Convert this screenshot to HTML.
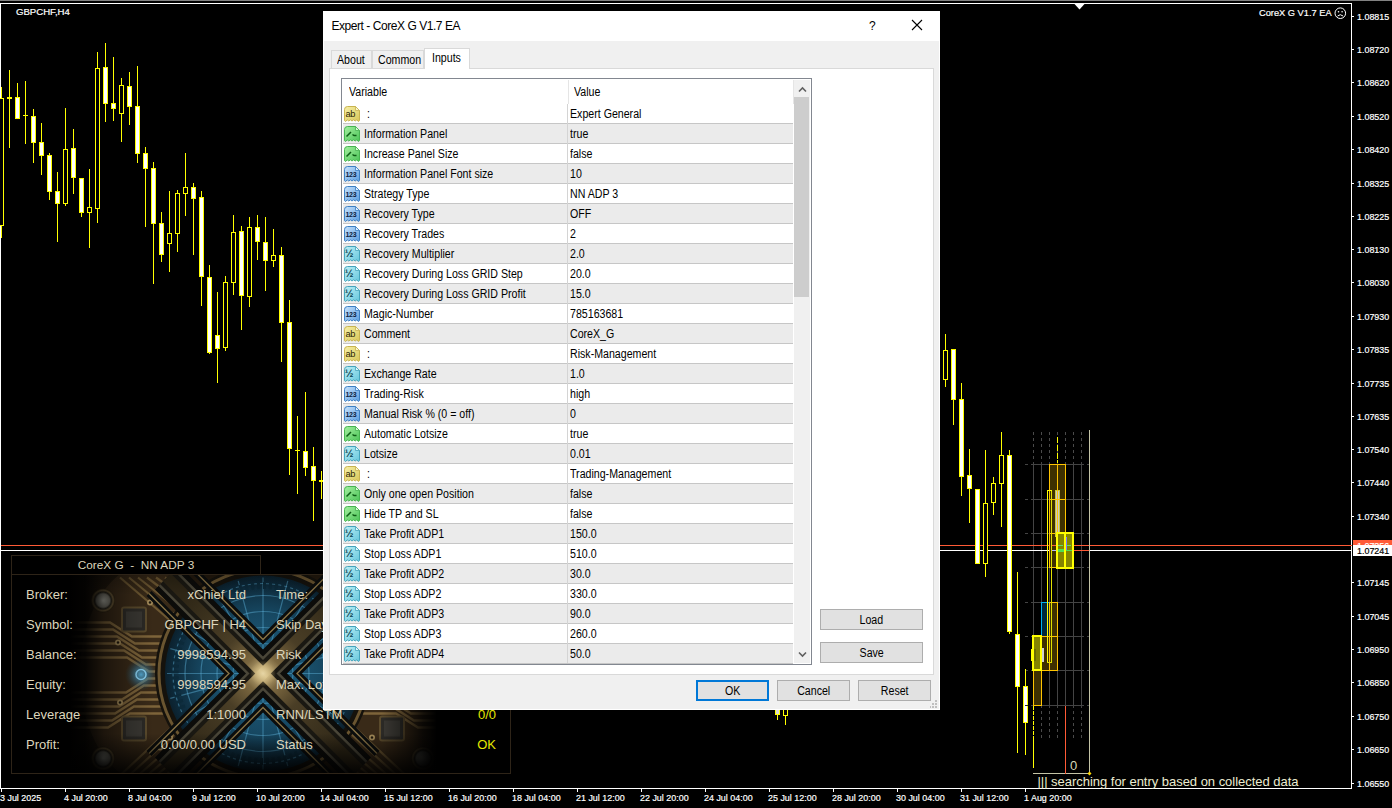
<!DOCTYPE html>
<html><head><meta charset="utf-8"><title>CoreX G V1.7 EA</title>
<style>
html,body{margin:0;padding:0;background:#000;width:1392px;height:808px;overflow:hidden}
body{position:relative;font-family:"Liberation Sans",sans-serif}
.ct{position:absolute;color:#fff;white-space:pre;line-height:normal}
.ax{position:absolute;color:#fff;white-space:pre;font-size:9.6px;line-height:13px;transform:scaleX(.93);transform-origin:0 0;-webkit-text-stroke:.2px currentColor}
#ptitle{position:absolute;left:11px;top:555px;width:250px;height:20px;box-sizing:border-box;border:1px solid #2e2418;color:#ddd6bc;font-size:11.8px;text-align:center;line-height:18px;white-space:pre}
#pmain{position:absolute;left:11px;top:574px;width:500px;height:200px;box-sizing:border-box;border:1px solid #2e2418}
.pt{position:absolute;color:#ddd6bc;font-size:13px;line-height:15px;white-space:pre}
.pt.r{text-align:right}
.pt.y{color:#e6e600}
#dlg{position:absolute;left:323px;top:11px;width:617px;height:699px;box-sizing:border-box;background:#f0f0f0;font-size:12px;line-height:14px;color:#000;overflow:hidden;box-shadow:inset 1px 0 #fff,inset -1px 0 #fff,inset 0 -1px #fff}
.s{display:inline-block;transform:scaleX(.885);transform-origin:0 50%}
.btn .s{transform-origin:50% 50%;position:relative;top:1px}
#dlg span{white-space:pre}
.tbar{position:absolute;left:0;top:0;width:617px;height:30px;background:#fff}
.ttl{position:absolute;left:8.5px;top:8px;font-size:12px;letter-spacing:-.45px}
.q{position:absolute;left:546px;top:8px;font-size:12px}
.x{position:absolute;left:588px;top:8px}
.tab{position:absolute;box-sizing:border-box;border:1px solid #d9d9d9;border-bottom:none;background:#f0f0f0}
.tab span{position:absolute}
.tab.sel{background:#fff}
.tpanel{position:absolute;left:6px;top:57px;width:605px;height:607px;box-sizing:border-box;border:1px solid #d9d9d9;background:#fff}
.list{position:absolute;left:18px;top:67px;width:471px;height:587px;box-sizing:border-box;border:1px solid #828790;background:#fff}
.hdr{position:absolute;left:1px;top:1px;width:450px;height:24px}
.hdr span{position:absolute;top:5px}
.hdr i{position:absolute;top:0;width:1px;height:24px;background:#e5e5e5}
.row{position:absolute;left:1px;width:450px;height:20px;box-sizing:border-box;border-bottom:1px solid #c6c6c6;background:#fff}
.row.g{background:#ebebeb}
.row .ic{position:absolute;left:1px;top:2px}
.row .n{position:absolute;left:21px;top:3px}
.row .v{position:absolute;left:227px;top:3px}
.cdiv{position:absolute;left:225px;top:25px;width:1px;height:559px;background:#d4d4d4}
.sb{position:absolute;left:452px;top:1px;width:16px;height:583px;background:#f0f0f0}
.thumb{position:absolute;left:0;top:17px;width:15px;height:200px;background:#cdcdcd}
.btn{position:absolute;box-sizing:border-box;border:1px solid #adadad;background:#e1e1e1;text-align:center}
.btn.def{border:2px solid #0078d7;line-height:17px !important}
.grip{position:absolute;left:606px;top:689px}
</style></head>
<body>
<svg width="0" height="0" style="position:absolute"><defs>
<linearGradient id="g-ab" x1="0" y1="0" x2="1" y2="1"><stop offset="0" stop-color="#f8f0a8"/><stop offset="1" stop-color="#d8c658"/></linearGradient>
<linearGradient id="g-bo" x1="0" y1="0" x2="1" y2="1"><stop offset="0" stop-color="#a4f0a0"/><stop offset="1" stop-color="#4cc458"/></linearGradient>
<linearGradient id="g-in" x1="0" y1="0" x2="1" y2="1"><stop offset="0" stop-color="#c8e2fc"/><stop offset="1" stop-color="#5c9ee0"/></linearGradient>
<linearGradient id="g-db" x1="0" y1="0" x2="1" y2="1"><stop offset="0" stop-color="#c0f0f6"/><stop offset="1" stop-color="#64c6dc"/></linearGradient>
<path id="pg" d="M0.5 3.5 Q0.5 0.5 3.5 0.5 L11.5 0.5 L15.5 4.5 L15.5 14.6 L14.3 15.5 L12.8 13.8 L11.2 15 L9.6 13.8 L8 15 L6.4 13.8 L4.8 15 L3.2 13.8 L1.7 15.5 L0.5 14.6 Z"/>
<path id="fold" d="M11.5 0.5 L11.5 4.5 L15.5 4.5 Z"/>
<symbol id="i-ab" viewBox="0 0 16 16"><use href="#pg" fill="url(#g-ab)" stroke="#c8b450"/><use href="#fold" fill="#fbf6cc" stroke="#c8b450" stroke-width=".8"/><text x="1.4" y="11.2" font-family="Liberation Sans, sans-serif" font-size="9.3" fill="#2c2600" letter-spacing="-.4">ab</text></symbol>
<symbol id="i-bo" viewBox="0 0 16 16"><use href="#pg" fill="url(#g-bo)" stroke="#46b450"/><use href="#fold" fill="#d4f8d0" stroke="#46b450" stroke-width=".8"/><path d="M2.5 10.5 L7 6 M8.5 8.5 L10 9.5 L12.5 9.5" stroke="#0c5c14" stroke-width="1.5" fill="none"/></symbol>
<symbol id="i-in" viewBox="0 0 16 16"><use href="#pg" fill="url(#g-in)" stroke="#3c80c4"/><use href="#fold" fill="#dcecfc" stroke="#3c80c4" stroke-width=".8"/><text x="1.5" y="11.1" font-family="Liberation Sans, sans-serif" font-size="7" font-weight="bold" fill="#0c1c3c" letter-spacing="-.3">123</text></symbol>
<symbol id="i-db" viewBox="0 0 16 16"><use href="#pg" fill="url(#g-db)" stroke="#44a4bc"/><use href="#fold" fill="#dcf6fa" stroke="#44a4bc" stroke-width=".8"/><text x="0.8" y="10.8" font-family="Liberation Sans, sans-serif" font-size="10.5" font-weight="bold" fill="#0c4454">½</text></symbol>
</defs></svg>
<svg width="1392" height="808" viewBox="0 0 1392 808" shape-rendering="crispEdges" style="position:absolute;left:0;top:0">
<rect x="0" y="0" width="1392" height="1" fill="#828282"/>
<rect x="0" y="3" width="1352" height="1" fill="#fff"/>
<rect x="0" y="3" width="1" height="786" fill="#fff"/>
<rect x="1351" y="3" width="1" height="786" fill="#fff"/>
<rect x="0" y="788" width="1352" height="1" fill="#fff"/>
<polygon points="1074.5,4 1084.5,4 1079.5,9.5" fill="#fff" shape-rendering="auto"/>
<rect x="1352" y="16" width="2" height="1" fill="#fff"/>
<rect x="1352" y="49" width="2" height="1" fill="#fff"/>
<rect x="1352" y="82" width="2" height="1" fill="#fff"/>
<rect x="1352" y="116" width="2" height="1" fill="#fff"/>
<rect x="1352" y="149" width="2" height="1" fill="#fff"/>
<rect x="1352" y="183" width="2" height="1" fill="#fff"/>
<rect x="1352" y="216" width="2" height="1" fill="#fff"/>
<rect x="1352" y="249" width="2" height="1" fill="#fff"/>
<rect x="1352" y="282" width="2" height="1" fill="#fff"/>
<rect x="1352" y="316" width="2" height="1" fill="#fff"/>
<rect x="1352" y="349" width="2" height="1" fill="#fff"/>
<rect x="1352" y="383" width="2" height="1" fill="#fff"/>
<rect x="1352" y="416" width="2" height="1" fill="#fff"/>
<rect x="1352" y="449" width="2" height="1" fill="#fff"/>
<rect x="1352" y="482" width="2" height="1" fill="#fff"/>
<rect x="1352" y="516" width="2" height="1" fill="#fff"/>
<rect x="1352" y="582" width="2" height="1" fill="#fff"/>
<rect x="1352" y="616" width="2" height="1" fill="#fff"/>
<rect x="1352" y="649" width="2" height="1" fill="#fff"/>
<rect x="1352" y="682" width="2" height="1" fill="#fff"/>
<rect x="1352" y="716" width="2" height="1" fill="#fff"/>
<rect x="1352" y="749" width="2" height="1" fill="#fff"/>
<rect x="1352" y="783" width="2" height="1" fill="#fff"/>
<rect x="1" y="789" width="1" height="3" fill="#fff"/>
<rect x="65" y="789" width="1" height="3" fill="#fff"/>
<rect x="129" y="789" width="1" height="3" fill="#fff"/>
<rect x="193" y="789" width="1" height="3" fill="#fff"/>
<rect x="257" y="789" width="1" height="3" fill="#fff"/>
<rect x="321" y="789" width="1" height="3" fill="#fff"/>
<rect x="385" y="789" width="1" height="3" fill="#fff"/>
<rect x="449" y="789" width="1" height="3" fill="#fff"/>
<rect x="513" y="789" width="1" height="3" fill="#fff"/>
<rect x="577" y="789" width="1" height="3" fill="#fff"/>
<rect x="641" y="789" width="1" height="3" fill="#fff"/>
<rect x="705" y="789" width="1" height="3" fill="#fff"/>
<rect x="769" y="789" width="1" height="3" fill="#fff"/>
<rect x="833" y="789" width="1" height="3" fill="#fff"/>
<rect x="897" y="789" width="1" height="3" fill="#fff"/>
<rect x="961" y="789" width="1" height="3" fill="#fff"/>
<rect x="1025" y="789" width="1" height="3" fill="#fff"/>
<rect x="1033" y="432" width="1" height="3" fill="#4a4a4a"/>
<rect x="1033" y="438" width="1" height="3" fill="#4a4a4a"/>
<rect x="1033" y="444" width="1" height="3" fill="#4a4a4a"/>
<rect x="1033" y="450" width="1" height="3" fill="#4a4a4a"/>
<rect x="1033" y="456" width="1" height="3" fill="#4a4a4a"/>
<rect x="1033" y="462" width="1" height="244" fill="#444444"/>
<rect x="1041" y="432" width="1" height="3" fill="#4a4a4a"/>
<rect x="1041" y="438" width="1" height="3" fill="#4a4a4a"/>
<rect x="1041" y="444" width="1" height="3" fill="#4a4a4a"/>
<rect x="1041" y="450" width="1" height="3" fill="#4a4a4a"/>
<rect x="1041" y="456" width="1" height="3" fill="#4a4a4a"/>
<rect x="1041" y="462" width="1" height="244" fill="#444444"/>
<rect x="1049" y="432" width="1" height="3" fill="#4a4a4a"/>
<rect x="1049" y="438" width="1" height="3" fill="#4a4a4a"/>
<rect x="1049" y="444" width="1" height="3" fill="#4a4a4a"/>
<rect x="1049" y="450" width="1" height="3" fill="#4a4a4a"/>
<rect x="1049" y="456" width="1" height="3" fill="#4a4a4a"/>
<rect x="1049" y="462" width="1" height="244" fill="#444444"/>
<rect x="1057" y="432" width="1" height="3" fill="#4a4a4a"/>
<rect x="1057" y="438" width="1" height="3" fill="#4a4a4a"/>
<rect x="1057" y="444" width="1" height="3" fill="#4a4a4a"/>
<rect x="1057" y="450" width="1" height="3" fill="#4a4a4a"/>
<rect x="1057" y="456" width="1" height="3" fill="#4a4a4a"/>
<rect x="1057" y="462" width="1" height="244" fill="#444444"/>
<rect x="1065" y="432" width="1" height="3" fill="#4a4a4a"/>
<rect x="1065" y="438" width="1" height="3" fill="#4a4a4a"/>
<rect x="1065" y="444" width="1" height="3" fill="#4a4a4a"/>
<rect x="1065" y="450" width="1" height="3" fill="#4a4a4a"/>
<rect x="1065" y="456" width="1" height="3" fill="#4a4a4a"/>
<rect x="1065" y="462" width="1" height="244" fill="#444444"/>
<rect x="1073" y="432" width="1" height="3" fill="#4a4a4a"/>
<rect x="1073" y="438" width="1" height="3" fill="#4a4a4a"/>
<rect x="1073" y="444" width="1" height="3" fill="#4a4a4a"/>
<rect x="1073" y="450" width="1" height="3" fill="#4a4a4a"/>
<rect x="1073" y="456" width="1" height="3" fill="#4a4a4a"/>
<rect x="1073" y="462" width="1" height="244" fill="#444444"/>
<rect x="1081" y="432" width="1" height="3" fill="#4a4a4a"/>
<rect x="1081" y="438" width="1" height="3" fill="#4a4a4a"/>
<rect x="1081" y="444" width="1" height="3" fill="#4a4a4a"/>
<rect x="1081" y="450" width="1" height="3" fill="#4a4a4a"/>
<rect x="1081" y="456" width="1" height="3" fill="#4a4a4a"/>
<rect x="1081" y="462" width="1" height="244" fill="#444444"/>
<rect x="1041" y="706" width="1" height="2" fill="#444444"/>
<rect x="1041" y="711" width="1" height="3" fill="#4a4a4a"/>
<rect x="1041" y="717" width="1" height="3" fill="#4a4a4a"/>
<rect x="1041" y="723" width="1" height="3" fill="#4a4a4a"/>
<rect x="1041" y="729" width="1" height="3" fill="#4a4a4a"/>
<rect x="1041" y="735" width="1" height="3" fill="#4a4a4a"/>
<rect x="1049" y="706" width="1" height="2" fill="#444444"/>
<rect x="1049" y="711" width="1" height="3" fill="#4a4a4a"/>
<rect x="1049" y="717" width="1" height="3" fill="#4a4a4a"/>
<rect x="1049" y="723" width="1" height="3" fill="#4a4a4a"/>
<rect x="1049" y="729" width="1" height="3" fill="#4a4a4a"/>
<rect x="1049" y="735" width="1" height="3" fill="#4a4a4a"/>
<rect x="1057" y="706" width="1" height="2" fill="#444444"/>
<rect x="1057" y="711" width="1" height="3" fill="#4a4a4a"/>
<rect x="1057" y="717" width="1" height="3" fill="#4a4a4a"/>
<rect x="1057" y="723" width="1" height="3" fill="#4a4a4a"/>
<rect x="1057" y="729" width="1" height="3" fill="#4a4a4a"/>
<rect x="1057" y="735" width="1" height="3" fill="#4a4a4a"/>
<rect x="1073" y="706" width="1" height="2" fill="#444444"/>
<rect x="1073" y="711" width="1" height="3" fill="#4a4a4a"/>
<rect x="1073" y="717" width="1" height="3" fill="#4a4a4a"/>
<rect x="1073" y="723" width="1" height="3" fill="#4a4a4a"/>
<rect x="1073" y="729" width="1" height="3" fill="#4a4a4a"/>
<rect x="1073" y="735" width="1" height="3" fill="#4a4a4a"/>
<rect x="1081" y="706" width="1" height="2" fill="#444444"/>
<rect x="1081" y="711" width="1" height="3" fill="#4a4a4a"/>
<rect x="1081" y="717" width="1" height="3" fill="#4a4a4a"/>
<rect x="1081" y="723" width="1" height="3" fill="#4a4a4a"/>
<rect x="1081" y="729" width="1" height="3" fill="#4a4a4a"/>
<rect x="1081" y="735" width="1" height="3" fill="#4a4a4a"/>
<rect x="1025" y="464" width="3" height="1" fill="#444444"/>
<rect x="1031" y="464" width="53" height="1" fill="#444444"/>
<rect x="1087" y="464" width="2" height="1" fill="#444444"/>
<rect x="1025" y="499" width="3" height="1" fill="#444444"/>
<rect x="1031" y="499" width="53" height="1" fill="#444444"/>
<rect x="1087" y="499" width="2" height="1" fill="#444444"/>
<rect x="1025" y="533" width="3" height="1" fill="#444444"/>
<rect x="1031" y="533" width="53" height="1" fill="#444444"/>
<rect x="1087" y="533" width="2" height="1" fill="#444444"/>
<rect x="1025" y="567" width="3" height="1" fill="#444444"/>
<rect x="1031" y="567" width="53" height="1" fill="#444444"/>
<rect x="1087" y="567" width="2" height="1" fill="#444444"/>
<rect x="1025" y="602" width="3" height="1" fill="#444444"/>
<rect x="1031" y="602" width="53" height="1" fill="#444444"/>
<rect x="1087" y="602" width="2" height="1" fill="#444444"/>
<rect x="1025" y="636" width="3" height="1" fill="#444444"/>
<rect x="1031" y="636" width="53" height="1" fill="#444444"/>
<rect x="1087" y="636" width="2" height="1" fill="#444444"/>
<rect x="1025" y="670" width="3" height="1" fill="#444444"/>
<rect x="1031" y="670" width="53" height="1" fill="#444444"/>
<rect x="1087" y="670" width="2" height="1" fill="#444444"/>
<rect x="1025" y="705" width="3" height="1" fill="#444444"/>
<rect x="1031" y="705" width="53" height="1" fill="#444444"/>
<rect x="1087" y="705" width="2" height="1" fill="#444444"/>
<rect x="1" y="545" width="1351" height="1" fill="#ff5a36"/>
<rect x="1" y="550" width="1351" height="1" fill="#fff"/>
<rect x="1074" y="550" width="16" height="1" fill="#ff5a36"/>
<rect x="1089" y="430" width="1" height="344" fill="#c4c4a6"/>
<rect x="1033" y="773" width="57" height="1" fill="#c4c4a6"/>
<polygon points="1089.5,771.5 1091.5,773.5 1089.5,775.5 1087.5,773.5" fill="#ffd700" shape-rendering="auto"/>
<rect x="1065" y="706" width="1" height="68" fill="#ff5a36"/>
<rect x="1057" y="437" width="1" height="6" fill="#ffff00"/>
<rect x="1057" y="445" width="1" height="6" fill="#ffff00"/>
<rect x="1057" y="453" width="1" height="6" fill="#ffff00"/>
<rect x="1057" y="460" width="1" height="3" fill="#ffff00"/>
<rect x="1" y="87" width="1" height="151" fill="#ffff00"/><rect x="-1" y="98" width="5" height="128" fill="#ffff00"/><rect x="0" y="99" width="3" height="126" fill="#000"/>
<rect x="9" y="70" width="1" height="78" fill="#ffff00"/><rect x="7" y="97" width="5" height="2" fill="#ffff00"/>
<rect x="17" y="83" width="1" height="36" fill="#ffff00"/><rect x="15" y="97" width="5" height="22" fill="#ffff00"/><rect x="16" y="98" width="3" height="20" fill="#fff"/>
<rect x="25" y="81" width="1" height="63" fill="#ffff00"/><rect x="23" y="115" width="5" height="1" fill="#ffff00"/>
<rect x="33" y="109" width="1" height="54" fill="#ffff00"/><rect x="31" y="116" width="5" height="27" fill="#ffff00"/><rect x="32" y="117" width="3" height="25" fill="#fff"/>
<rect x="41" y="123" width="1" height="52" fill="#ffff00"/><rect x="39" y="142" width="5" height="14" fill="#ffff00"/><rect x="40" y="143" width="3" height="12" fill="#fff"/>
<rect x="49" y="153" width="1" height="47" fill="#ffff00"/><rect x="47" y="155" width="5" height="37" fill="#ffff00"/><rect x="48" y="156" width="3" height="35" fill="#fff"/>
<rect x="57" y="172" width="1" height="70" fill="#ffff00"/><rect x="55" y="191" width="5" height="13" fill="#ffff00"/><rect x="56" y="192" width="3" height="11" fill="#fff"/>
<rect x="65" y="108" width="1" height="98" fill="#ffff00"/><rect x="63" y="149" width="5" height="55" fill="#ffff00"/><rect x="64" y="150" width="3" height="53" fill="#000"/>
<rect x="73" y="129" width="1" height="65" fill="#ffff00"/><rect x="71" y="148" width="5" height="30" fill="#ffff00"/><rect x="72" y="149" width="3" height="28" fill="#fff"/>
<rect x="81" y="178" width="1" height="39" fill="#ffff00"/><rect x="79" y="178" width="5" height="35" fill="#ffff00"/><rect x="80" y="179" width="3" height="33" fill="#fff"/>
<rect x="89" y="169" width="1" height="79" fill="#ffff00"/><rect x="87" y="207" width="5" height="6" fill="#ffff00"/><rect x="88" y="208" width="3" height="4" fill="#000"/>
<rect x="97" y="52" width="1" height="171" fill="#ffff00"/><rect x="95" y="68" width="5" height="141" fill="#ffff00"/><rect x="96" y="69" width="3" height="139" fill="#000"/>
<rect x="105" y="43" width="1" height="79" fill="#ffff00"/><rect x="103" y="67" width="5" height="37" fill="#ffff00"/><rect x="104" y="68" width="3" height="35" fill="#fff"/>
<rect x="113" y="57" width="1" height="64" fill="#ffff00"/><rect x="111" y="103" width="5" height="6" fill="#ffff00"/><rect x="112" y="104" width="3" height="4" fill="#fff"/>
<rect x="121" y="78" width="1" height="64" fill="#ffff00"/><rect x="119" y="85" width="5" height="29" fill="#ffff00"/><rect x="120" y="86" width="3" height="27" fill="#000"/>
<rect x="129" y="72" width="1" height="53" fill="#ffff00"/><rect x="127" y="86" width="5" height="21" fill="#ffff00"/><rect x="128" y="87" width="3" height="19" fill="#fff"/>
<rect x="137" y="66" width="1" height="97" fill="#ffff00"/><rect x="135" y="106" width="5" height="48" fill="#ffff00"/><rect x="136" y="107" width="3" height="46" fill="#fff"/>
<rect x="145" y="147" width="1" height="80" fill="#ffff00"/><rect x="143" y="153" width="5" height="16" fill="#ffff00"/><rect x="144" y="154" width="3" height="14" fill="#fff"/>
<rect x="153" y="162" width="1" height="122" fill="#ffff00"/><rect x="151" y="168" width="5" height="56" fill="#ffff00"/><rect x="152" y="169" width="3" height="54" fill="#fff"/>
<rect x="161" y="212" width="1" height="50" fill="#ffff00"/><rect x="159" y="223" width="5" height="32" fill="#ffff00"/><rect x="160" y="224" width="3" height="30" fill="#fff"/>
<rect x="169" y="191" width="1" height="81" fill="#ffff00"/><rect x="167" y="233" width="5" height="11" fill="#ffff00"/><rect x="168" y="234" width="3" height="9" fill="#000"/>
<rect x="177" y="190" width="1" height="62" fill="#ffff00"/><rect x="175" y="193" width="5" height="41" fill="#ffff00"/><rect x="176" y="194" width="3" height="39" fill="#000"/>
<rect x="185" y="153" width="1" height="63" fill="#ffff00"/><rect x="183" y="187" width="5" height="7" fill="#ffff00"/><rect x="184" y="188" width="3" height="5" fill="#000"/>
<rect x="193" y="183" width="1" height="72" fill="#ffff00"/><rect x="191" y="187" width="5" height="12" fill="#ffff00"/><rect x="192" y="188" width="3" height="10" fill="#fff"/>
<rect x="201" y="191" width="1" height="115" fill="#ffff00"/><rect x="199" y="197" width="5" height="80" fill="#ffff00"/><rect x="200" y="198" width="3" height="78" fill="#fff"/>
<rect x="209" y="265" width="1" height="89" fill="#ffff00"/><rect x="207" y="277" width="5" height="76" fill="#ffff00"/><rect x="208" y="278" width="3" height="74" fill="#fff"/>
<rect x="217" y="292" width="1" height="91" fill="#ffff00"/><rect x="215" y="335" width="5" height="14" fill="#ffff00"/><rect x="216" y="336" width="3" height="12" fill="#fff"/>
<rect x="225" y="276" width="1" height="75" fill="#ffff00"/><rect x="223" y="282" width="5" height="66" fill="#ffff00"/><rect x="224" y="283" width="3" height="64" fill="#000"/>
<rect x="233" y="215" width="1" height="80" fill="#ffff00"/><rect x="231" y="232" width="5" height="51" fill="#ffff00"/><rect x="232" y="233" width="3" height="49" fill="#000"/>
<rect x="241" y="226" width="1" height="104" fill="#ffff00"/><rect x="239" y="231" width="5" height="65" fill="#ffff00"/><rect x="240" y="232" width="3" height="63" fill="#fff"/>
<rect x="249" y="217" width="1" height="90" fill="#ffff00"/><rect x="247" y="227" width="5" height="70" fill="#ffff00"/><rect x="248" y="228" width="3" height="68" fill="#000"/>
<rect x="257" y="215" width="1" height="45" fill="#ffff00"/><rect x="255" y="227" width="5" height="15" fill="#ffff00"/><rect x="256" y="228" width="3" height="13" fill="#fff"/>
<rect x="265" y="217" width="1" height="74" fill="#ffff00"/><rect x="263" y="242" width="5" height="19" fill="#ffff00"/><rect x="264" y="243" width="3" height="17" fill="#fff"/>
<rect x="273" y="229" width="1" height="38" fill="#ffff00"/><rect x="271" y="255" width="5" height="6" fill="#ffff00"/><rect x="272" y="256" width="3" height="4" fill="#000"/>
<rect x="281" y="247" width="1" height="115" fill="#ffff00"/><rect x="279" y="255" width="5" height="68" fill="#ffff00"/><rect x="280" y="256" width="3" height="66" fill="#fff"/>
<rect x="289" y="300" width="1" height="175" fill="#ffff00"/><rect x="287" y="322" width="5" height="127" fill="#ffff00"/><rect x="288" y="323" width="3" height="125" fill="#fff"/>
<rect x="297" y="416" width="1" height="78" fill="#ffff00"/><rect x="295" y="450" width="5" height="1" fill="#ffff00"/>
<rect x="305" y="392" width="1" height="84" fill="#ffff00"/><rect x="303" y="451" width="5" height="17" fill="#ffff00"/><rect x="304" y="452" width="3" height="15" fill="#fff"/>
<rect x="313" y="447" width="1" height="74" fill="#ffff00"/><rect x="311" y="466" width="5" height="15" fill="#ffff00"/><rect x="312" y="467" width="3" height="13" fill="#fff"/>
<rect x="321" y="471" width="1" height="28" fill="#ffff00"/><rect x="319" y="480" width="5" height="2" fill="#ffff00"/>
<rect x="777" y="700" width="1" height="20" fill="#ffff00"/><rect x="775" y="700" width="5" height="15" fill="#ffff00"/><rect x="776" y="701" width="3" height="13" fill="#d8d8d8"/>
<rect x="785" y="700" width="1" height="25" fill="#ffff00"/><rect x="783" y="700" width="5" height="16" fill="#ffff00"/><rect x="784" y="701" width="3" height="14" fill="#000"/>
<rect x="945" y="334" width="1" height="53" fill="#ffff00"/><rect x="943" y="350" width="5" height="30" fill="#ffff00"/><rect x="944" y="351" width="3" height="28" fill="#000"/>
<rect x="953" y="349" width="1" height="76" fill="#ffff00"/><rect x="951" y="349" width="5" height="51" fill="#ffff00"/><rect x="952" y="350" width="3" height="49" fill="#fff"/>
<rect x="961" y="383" width="1" height="113" fill="#ffff00"/><rect x="959" y="399" width="5" height="78" fill="#ffff00"/><rect x="960" y="400" width="3" height="76" fill="#fff"/>
<rect x="969" y="449" width="1" height="74" fill="#ffff00"/><rect x="967" y="475" width="5" height="14" fill="#ffff00"/><rect x="968" y="476" width="3" height="12" fill="#fff"/>
<rect x="977" y="489" width="1" height="75" fill="#ffff00"/><rect x="975" y="489" width="5" height="75" fill="#ffff00"/><rect x="976" y="490" width="3" height="73" fill="#fff"/>
<rect x="985" y="450" width="1" height="127" fill="#ffff00"/><rect x="983" y="503" width="5" height="61" fill="#ffff00"/><rect x="984" y="504" width="3" height="59" fill="#000"/>
<rect x="993" y="477" width="1" height="38" fill="#ffff00"/><rect x="991" y="483" width="5" height="20" fill="#ffff00"/><rect x="992" y="484" width="3" height="18" fill="#000"/>
<rect x="1001" y="432" width="1" height="95" fill="#ffff00"/><rect x="999" y="455" width="5" height="29" fill="#ffff00"/><rect x="1000" y="456" width="3" height="27" fill="#000"/>
<rect x="1009" y="450" width="1" height="184" fill="#ffff00"/><rect x="1007" y="455" width="5" height="177" fill="#ffff00"/><rect x="1008" y="456" width="3" height="175" fill="#fff"/>
<rect x="1017" y="572" width="1" height="181" fill="#ffff00"/><rect x="1015" y="634" width="5" height="53" fill="#ffff00"/><rect x="1016" y="635" width="3" height="51" fill="#fff"/>
<rect x="1025" y="669" width="1" height="86" fill="#ffff00"/><rect x="1023" y="686" width="5" height="37" fill="#ffff00"/><rect x="1024" y="687" width="3" height="35" fill="#fff"/>
<rect x="1025" y="705" width="3" height="1" fill="#2a2a2a"/>
<rect x="1033" y="706" width="1" height="4" fill="#ffff00"/>
<rect x="1033" y="711" width="1" height="4" fill="#ffff00"/>
<rect x="1033" y="716" width="1" height="4" fill="#ffff00"/>
<rect x="1033" y="721" width="1" height="4" fill="#ffff00"/>
<rect x="1033" y="726" width="1" height="4" fill="#ffff00"/>
<rect x="1033" y="731" width="1" height="4" fill="#ffff00"/>
<rect x="1033" y="736" width="1" height="4" fill="#ffff00"/>
<rect x="1033" y="737" width="1" height="31" fill="#ffff00"/>
<rect x="1031" y="649" width="5" height="12" fill="#ffff00"/>
<rect x="1039" y="648" width="5" height="14" fill="#d4d4d4"/>
<rect x="1049" y="464" width="17" height="70" fill="#ffc400"/><rect x="1050" y="465" width="15" height="68" fill="#3e3000"/>
<rect x="1057" y="464" width="1" height="70" fill="#ffc400"/>
<rect x="1049" y="499" width="17" height="1" fill="#ffc400"/>
<rect x="1049" y="533" width="9" height="35" fill="#ffc400"/><rect x="1050" y="534" width="7" height="33" fill="#3e3000"/>
<rect x="1055" y="490" width="5" height="47" fill="#c8c83c"/>
<rect x="1056" y="491" width="3" height="45" fill="#c8c8c8"/>
<rect x="1058" y="534" width="1" height="3" fill="#8080ff"/>
<rect x="1057" y="464" width="1" height="70" fill="#ffc400"/>
<rect x="1049" y="499" width="17" height="1" fill="#ffc400"/>
<rect x="1052" y="545" width="4" height="1" fill="#ff5a36"/>
<rect x="1041" y="602" width="9" height="35" fill="#00b0f0"/><rect x="1042" y="603" width="7" height="33" fill="#00283a"/>
<rect x="1049" y="602" width="9" height="35" fill="#ffc400"/><rect x="1050" y="603" width="7" height="33" fill="#3e3000"/>
<rect x="1041" y="636" width="9" height="35" fill="#ffc400"/><rect x="1042" y="637" width="7" height="33" fill="#3e3000"/>
<rect x="1049" y="636" width="9" height="35" fill="#ffc400"/><rect x="1050" y="637" width="7" height="33" fill="#3e3000"/>
<rect x="1033" y="670" width="9" height="36" fill="#ffc400"/><rect x="1034" y="671" width="7" height="34" fill="#3e3000"/>
<rect x="1042" y="648" width="2" height="14" fill="#d0d0d0"/>
<rect x="1047" y="490" width="1" height="173" fill="#ffff00"/>
<rect x="1051" y="490" width="1" height="173" fill="#e0e000"/>
<rect x="1047" y="490" width="5" height="1" fill="#ffff00"/>
<rect x="1047" y="662" width="5" height="1" fill="#e0e000"/>
<rect x="1056" y="532" width="18" height="37" fill="#ffff00"/><rect x="1058" y="534" width="14" height="33" fill="#848400"/>
<rect x="1064" y="532" width="2" height="37" fill="#ffff00"/>
<rect x="1058" y="545" width="5" height="1" fill="#60e060"/>
<rect x="1067" y="545" width="4" height="1" fill="#60e060"/>
<rect x="1058" y="549" width="6" height="3" fill="#50e050"/>
<rect x="1066" y="550" width="6" height="1" fill="#50e050"/>
<rect x="1066" y="537" width="1" height="13" fill="#7878ff"/>
<rect x="1052" y="550" width="4" height="1" fill="#b4b4ff"/>
<rect x="1032" y="635" width="10" height="36" fill="#ffff00"/><rect x="1034" y="637" width="6" height="32" fill="#848400"/>
<rect x="1034" y="649" width="2" height="12" fill="#6a6a00"/>
</svg>
<div class="ct" style="left:16px;top:5px;font-size:9.6px;line-height:13px;-webkit-text-stroke:.2px #fff">GBPCHF,H4</div>
<div class="ct" style="left:1259px;top:6px;font-size:9.6px;line-height:13px;transform:scaleX(.965);transform-origin:0 0;-webkit-text-stroke:.2px #fff">CoreX G V1.7 EA</div>
<svg style="position:absolute;left:1333px;top:6px" width="14" height="14" viewBox="0 0 14 14"><circle cx="7.3" cy="7.2" r="5.3" fill="none" stroke="#fff" stroke-width="1"/><circle cx="5.5" cy="5.8" r="0.8" fill="#fff"/><circle cx="9.1" cy="5.8" r="0.8" fill="#fff"/><path d="M4.6 10 Q7.3 7.4 10 10" fill="none" stroke="#fff" stroke-width="1"/></svg>
<div class="ax" style="left:1357px;top:10px">1.08815</div>
<div class="ax" style="left:1357px;top:43px">1.08720</div>
<div class="ax" style="left:1357px;top:76px">1.08620</div>
<div class="ax" style="left:1357px;top:110px">1.08520</div>
<div class="ax" style="left:1357px;top:143px">1.08420</div>
<div class="ax" style="left:1357px;top:177px">1.08325</div>
<div class="ax" style="left:1357px;top:210px">1.08225</div>
<div class="ax" style="left:1357px;top:243px">1.08130</div>
<div class="ax" style="left:1357px;top:276px">1.08030</div>
<div class="ax" style="left:1357px;top:310px">1.07930</div>
<div class="ax" style="left:1357px;top:343px">1.07835</div>
<div class="ax" style="left:1357px;top:377px">1.07735</div>
<div class="ax" style="left:1357px;top:410px">1.07635</div>
<div class="ax" style="left:1357px;top:443px">1.07540</div>
<div class="ax" style="left:1357px;top:476px">1.07440</div>
<div class="ax" style="left:1357px;top:510px">1.07340</div>
<div class="ax" style="left:1357px;top:576px">1.07145</div>
<div class="ax" style="left:1357px;top:610px">1.07045</div>
<div class="ax" style="left:1357px;top:643px">1.06950</div>
<div class="ax" style="left:1357px;top:676px">1.06850</div>
<div class="ax" style="left:1357px;top:710px">1.06750</div>
<div class="ax" style="left:1357px;top:743px">1.06650</div>
<div class="ax" style="left:1357px;top:777px">1.06550</div>
<div style="position:absolute;left:1353px;top:540px;width:39px;height:6px;background:#ff5a36;overflow:hidden"><div class="ax" style="left:4px;top:-1px;color:#fff">1.07256</div></div>
<div style="position:absolute;left:1353px;top:545px;width:39px;height:11px;background:#fff"><div class="ax" style="left:4px;top:-1px;color:#000">1.07241</div></div>
<div class="ax" style="left:0px;top:791px">3 Jul 2025</div>
<div class="ax" style="left:64px;top:791px">4 Jul 20:00</div>
<div class="ax" style="left:128px;top:791px">8 Jul 04:00</div>
<div class="ax" style="left:192px;top:791px">9 Jul 12:00</div>
<div class="ax" style="left:256px;top:791px">10 Jul 20:00</div>
<div class="ax" style="left:320px;top:791px">14 Jul 04:00</div>
<div class="ax" style="left:384px;top:791px">15 Jul 12:00</div>
<div class="ax" style="left:448px;top:791px">16 Jul 20:00</div>
<div class="ax" style="left:512px;top:791px">18 Jul 04:00</div>
<div class="ax" style="left:576px;top:791px">21 Jul 12:00</div>
<div class="ax" style="left:640px;top:791px">22 Jul 20:00</div>
<div class="ax" style="left:704px;top:791px">24 Jul 04:00</div>
<div class="ax" style="left:768px;top:791px">25 Jul 12:00</div>
<div class="ax" style="left:832px;top:791px">28 Jul 20:00</div>
<div class="ax" style="left:896px;top:791px">30 Jul 04:00</div>
<div class="ax" style="left:960px;top:791px">31 Jul 12:00</div>
<div class="ax" style="left:1024px;top:791px">1 Aug 20:00</div>
<div class="ct" style="left:1070px;top:758px;font-size:13px;line-height:15px;color:#d8d8b8">0</div>
<div class="ct" style="left:1037.5px;top:774px;font-size:13px;line-height:15px;letter-spacing:-.03px;color:#ececd0">||| searching for entry based on collected data</div>
<div id="ptitle"><span>CoreX G&nbsp; - &nbsp;NN ADP 3</span></div>
<div id="pmain"></div>
<svg id="art" width="380" height="198" viewBox="70 575 380 198" style="position:absolute;left:70px;top:575px">
<defs>
<radialGradient id="gb" cx="263" cy="671" r="108" gradientUnits="userSpaceOnUse"><stop offset="0" stop-color="#206283"/><stop offset=".55" stop-color="#174862"/><stop offset=".85" stop-color="#0d2838"/><stop offset="1" stop-color="#08151c"/></radialGradient>
<linearGradient id="gx1" x1="185" y1="593" x2="341" y2="749" gradientUnits="userSpaceOnUse"><stop offset="0" stop-color="#2e2616"/><stop offset=".3" stop-color="#4a3e26"/><stop offset=".42" stop-color="#7c6840"/><stop offset=".5" stop-color="#d4c08c"/><stop offset=".58" stop-color="#7c6840"/><stop offset=".7" stop-color="#4a3e26"/><stop offset="1" stop-color="#2e2616"/></linearGradient>
<linearGradient id="gx2" x1="341" y1="593" x2="185" y2="749" gradientUnits="userSpaceOnUse"><stop offset="0" stop-color="#2e2616"/><stop offset=".3" stop-color="#4a3e26"/><stop offset=".42" stop-color="#7c6840"/><stop offset=".5" stop-color="#d4c08c"/><stop offset=".58" stop-color="#7c6840"/><stop offset=".7" stop-color="#4a3e26"/><stop offset="1" stop-color="#2e2616"/></linearGradient>
<linearGradient id="fadeh" x1="70" y1="0" x2="450" y2="0" gradientUnits="userSpaceOnUse"><stop offset="0" stop-color="#000" stop-opacity="1"/><stop offset=".04" stop-color="#000" stop-opacity=".9"/><stop offset=".09" stop-color="#000" stop-opacity=".5"/><stop offset=".16" stop-color="#000" stop-opacity=".18"/><stop offset=".22" stop-color="#000" stop-opacity="0"/><stop offset=".82" stop-color="#000" stop-opacity="0"/><stop offset=".885" stop-color="#000" stop-opacity=".45"/><stop offset=".93" stop-color="#000" stop-opacity=".82"/><stop offset=".965" stop-color="#000" stop-opacity="1"/></linearGradient>
<linearGradient id="fadev" x1="0" y1="575" x2="0" y2="773" gradientUnits="userSpaceOnUse"><stop offset="0" stop-color="#000" stop-opacity=".25"/><stop offset=".1" stop-color="#000" stop-opacity="0"/><stop offset=".8" stop-color="#000" stop-opacity="0"/><stop offset="1" stop-color="#000" stop-opacity=".9"/></linearGradient>
<radialGradient id="knob" cx=".5" cy=".5" r=".5"><stop offset="0" stop-color="#b8b8ac"/><stop offset=".55" stop-color="#77756a"/><stop offset=".7" stop-color="#2a261c"/><stop offset=".85" stop-color="#6a5836"/><stop offset="1" stop-color="#2a2010"/></radialGradient>
<radialGradient id="glow" cx=".5" cy=".5" r=".5"><stop offset="0" stop-color="#58b8e8" stop-opacity=".9"/><stop offset="1" stop-color="#1a5a80" stop-opacity="0"/></radialGradient>
<radialGradient id="xc" cx=".5" cy=".5" r=".5"><stop offset="0" stop-color="#e8d8a8" stop-opacity=".9"/><stop offset="1" stop-color="#d8b870" stop-opacity="0"/></radialGradient>
<clipPath id="cp"><rect x="70" y="575" width="380" height="198"/></clipPath>
</defs>
<g clip-path="url(#cp)"><g transform="translate(0,2.5)">
<rect x="70" y="565" width="380" height="220" fill="#241a0e"/>
<ellipse cx="150" cy="671" rx="70" ry="110" fill="#4a3820" opacity=".55"/><ellipse cx="380" cy="671" rx="70" ry="110" fill="#4a3820" opacity=".55"/>
<g fill="none" stroke="#7d643a" stroke-width="2.4"><path d="M70 620 L110 620 L132 634 L172 634" /><path d="M70 627 L113 627 L135 641 L172 641" /><path d="M70 634 L117 634 L139 648 L172 648" /><path d="M70 641 L120 641 L142 655 L172 655" /><path d="M70 648 L124 648 L146 662 L172 662" /><path d="M70 655 L127 655 L149 669 L172 669" /><path d="M70 690 L126 690 L148 676 L172 676" /><path d="M70 697 L122 697 L144 683 L172 683" /><path d="M70 704 L119 704 L141 690 L172 690" /><path d="M70 711 L115 711 L137 697 L172 697" /><path d="M70 718 L112 718 L134 704 L172 704" /><path d="M70 725 L108 725 L130 711 L172 711" /></g>
<g fill="none" stroke="#6e5832" stroke-width="2.2"><path d="M120 575 L196 640"/><path d="M120 773 L196 702"/><path d="M406 575 L330 640"/><path d="M406 773 L330 702"/><path d="M129 575 L203 636"/><path d="M129 773 L203 706"/><path d="M397 575 L323 636"/><path d="M397 773 L323 706"/><path d="M138 575 L210 632"/><path d="M138 773 L210 710"/><path d="M388 575 L316 632"/><path d="M388 773 L316 710"/><path d="M147 575 L217 628"/><path d="M147 773 L217 714"/><path d="M379 575 L309 628"/><path d="M379 773 L309 714"/><path d="M156 575 L224 624"/><path d="M156 773 L224 718"/><path d="M370 575 L302 624"/><path d="M370 773 L302 718"/><path d="M165 575 L231 620"/><path d="M165 773 L231 722"/><path d="M361 575 L295 620"/><path d="M361 773 L295 722"/><path d="M174 575 L238 616"/><path d="M174 773 L238 726"/><path d="M352 575 L288 616"/><path d="M352 773 L288 726"/></g>
<g fill="none" stroke="#7d643a" stroke-width="2.4"><path d="M450 620 L416 620 L394 634 L354 634" /><path d="M450 627 L413 627 L391 641 L354 641" /><path d="M450 634 L409 634 L387 648 L354 648" /><path d="M450 641 L406 641 L384 655 L354 655" /><path d="M450 648 L402 648 L380 662 L354 662" /><path d="M450 655 L399 655 L377 669 L354 669" /><path d="M450 690 L400 690 L378 676 L354 676" /><path d="M450 697 L404 697 L382 683 L354 683" /><path d="M450 704 L407 704 L385 690 L354 690" /><path d="M450 711 L411 711 L389 697 L354 697" /><path d="M450 718 L414 718 L392 704 L354 704" /><path d="M450 725 L418 725 L396 711 L354 711" /></g>
<rect x="122" y="605" width="24" height="24" rx="2" fill="#2c2a26" stroke="#5a4a2c" stroke-width="2"/><rect x="126" y="609" width="16" height="16" fill="#3a3833"/>
<rect x="122" y="714" width="24" height="24" rx="2" fill="#2c2a26" stroke="#5a4a2c" stroke-width="2"/><rect x="126" y="718" width="16" height="16" fill="#3a3833"/>
<rect x="380" y="605" width="24" height="24" rx="2" fill="#2c2a26" stroke="#5a4a2c" stroke-width="2"/><rect x="384" y="609" width="16" height="16" fill="#3a3833"/>
<rect x="380" y="714" width="24" height="24" rx="2" fill="#2c2a26" stroke="#5a4a2c" stroke-width="2"/><rect x="384" y="718" width="16" height="16" fill="#3a3833"/>
<circle cx="103" cy="598" r="12" fill="url(#knob)"/>
<circle cx="103" cy="756" r="12" fill="url(#knob)"/>
<circle cx="423" cy="598" r="12" fill="url(#knob)"/>
<circle cx="423" cy="756" r="12" fill="url(#knob)"/>
<circle cx="118" cy="640" r="3" fill="#a08858"/><circle cx="118" cy="640" r="1.2" fill="#20180c"/>
<circle cx="150" cy="600" r="3" fill="#a08858"/><circle cx="150" cy="600" r="1.2" fill="#20180c"/>
<circle cx="160" cy="745" r="3" fill="#a08858"/><circle cx="160" cy="745" r="1.2" fill="#20180c"/>
<circle cx="176" cy="612" r="3" fill="#a08858"/><circle cx="176" cy="612" r="1.2" fill="#20180c"/>
<circle cx="170" cy="735" r="3" fill="#a08858"/><circle cx="170" cy="735" r="1.2" fill="#20180c"/>
<circle cx="120" cy="700" r="3" fill="#a08858"/><circle cx="120" cy="700" r="1.2" fill="#20180c"/>
<circle cx="160" cy="676" r="3" fill="#a08858"/><circle cx="160" cy="676" r="1.2" fill="#20180c"/>
<circle cx="366" cy="612" r="3" fill="#a08858"/><circle cx="366" cy="612" r="1.2" fill="#20180c"/>
<circle cx="372" cy="735" r="3" fill="#a08858"/><circle cx="372" cy="735" r="1.2" fill="#20180c"/>
<circle cx="406" cy="700" r="3" fill="#a08858"/><circle cx="406" cy="700" r="1.2" fill="#20180c"/>
<circle cx="408" cy="640" r="3" fill="#a08858"/><circle cx="408" cy="640" r="1.2" fill="#20180c"/>
<circle cx="141" cy="672" r="16" fill="url(#glow)"/><circle cx="141" cy="672" r="5" fill="none" stroke="#8ad0f0" stroke-width="1.5"/>
<circle cx="263" cy="671" r="108" fill="#15120c"/>
<circle cx="263" cy="671" r="104" fill="none" stroke="#6a5530" stroke-width="3"/>
<circle cx="263" cy="671" r="98" fill="url(#gb)"/>
<g fill="none" stroke="#5fb4dc" stroke-opacity=".45" stroke-width="1.2"><circle cx="263" cy="671" r="30"/><circle cx="263" cy="671" r="46"/><circle cx="263" cy="671" r="62"/><circle cx="263" cy="671" r="78"/><circle cx="263" cy="671" r="90"/><path d="M287.0 671.0 L359.0 671.0"/><path d="M286.2 677.2 L355.7 695.8"/><path d="M283.8 683.0 L346.1 719.0"/><path d="M280.0 688.0 L330.9 738.9"/><path d="M275.0 691.8 L311.0 754.1"/><path d="M269.2 694.2 L287.8 763.7"/><path d="M263.0 695.0 L263.0 767.0"/><path d="M256.8 694.2 L238.2 763.7"/><path d="M251.0 691.8 L215.0 754.1"/><path d="M246.0 688.0 L195.1 738.9"/><path d="M242.2 683.0 L179.9 719.0"/><path d="M239.8 677.2 L170.3 695.8"/><path d="M239.0 671.0 L167.0 671.0"/><path d="M239.8 664.8 L170.3 646.2"/><path d="M242.2 659.0 L179.9 623.0"/><path d="M246.0 654.0 L195.1 603.1"/><path d="M251.0 650.2 L215.0 587.9"/><path d="M256.8 647.8 L238.2 578.3"/><path d="M263.0 647.0 L263.0 575.0"/><path d="M269.2 647.8 L287.8 578.3"/><path d="M275.0 650.2 L311.0 587.9"/><path d="M280.0 654.0 L330.9 603.1"/><path d="M283.8 659.0 L346.1 623.0"/><path d="M286.2 664.8 L355.7 646.2"/></g>
<circle cx="263" cy="671" r="88" fill="none" stroke="#0c2a3a" stroke-width="7" stroke-dasharray="3 3"/>
<g fill="none" stroke-linejoin="miter"><path d="M149 591 L229 671 L149 751 M377 591 L297 671 L377 751 M183 557 L263 637 L343 557 M183 785 L263 705 L343 785" stroke="#0b0d0d" stroke-width="7"/><path d="M149 591 L229 671 L149 751 M377 591 L297 671 L377 751 M183 557 L263 637 L343 557 M183 785 L263 705 L343 785" stroke="#8a7446" stroke-width="1.4"/></g>
<g stroke-linecap="butt" fill="none"><path d="M167 575 L359 767 M359 575 L167 767" stroke="#0c0c0a" stroke-width="34"/>
<path d="M167 575 L359 767 M359 575 L167 767" stroke="#4a4638" stroke-width="24"/>
<path d="M167 575 L359 767 M359 575 L167 767" stroke="#1a1812" stroke-width="19"/>
<path d="M167 575 L359 767" stroke="url(#gx1)" stroke-width="11"/><path d="M359 575 L167 767" stroke="url(#gx2)" stroke-width="11"/></g>
<circle cx="263" cy="671" r="13" fill="url(#xc)"/>
</g>
<rect x="70" y="575" width="380" height="198" fill="url(#fadeh)"/>
<rect x="70" y="575" width="380" height="198" fill="url(#fadev)"/>
</g></svg>
<div class="pt" style="left:26px;top:587px">Broker:</div>
<div class="pt r" style="left:96px;width:150px;top:587px">xChief Ltd</div>
<div class="pt" style="left:276px;top:587px">Time:</div>
<div class="pt" style="left:26px;top:617px">Symbol:</div>
<div class="pt r" style="left:96px;width:150px;top:617px">GBPCHF | H4</div>
<div class="pt" style="left:276px;top:617px">Skip Days:</div>
<div class="pt" style="left:26px;top:647px">Balance:</div>
<div class="pt r" style="left:96px;width:150px;top:647px">9998594.95</div>
<div class="pt" style="left:276px;top:647px">Risk</div>
<div class="pt" style="left:26px;top:677px">Equity:</div>
<div class="pt r" style="left:96px;width:150px;top:677px">9998594.95</div>
<div class="pt" style="left:276px;top:677px">Max. Lots</div>
<div class="pt" style="left:26px;top:707px">Leverage</div>
<div class="pt r" style="left:96px;width:150px;top:707px">1:1000</div>
<div class="pt" style="left:276px;top:707px">RNN/LSTM</div>
<div class="pt r y" style="left:396px;width:100px;top:707px">0/0</div>
<div class="pt" style="left:26px;top:737px">Profit:</div>
<div class="pt r" style="left:96px;width:150px;top:737px">0.00/0.00 USD</div>
<div class="pt" style="left:276px;top:737px">Status</div>
<div class="pt r y" style="left:396px;width:100px;top:737px">OK</div>
<div id="dlg">
<div class="tbar"><span class="ttl">Expert - CoreX G V1.7 EA</span><span class="q">?</span><svg class="x" width="12" height="12" viewBox="0 0 12 12"><path d="M1 1 L11 11 M11 1 L1 11" stroke="#000" stroke-width="1.1" fill="none"/></svg></div>
<div class="tab" style="left:8px;top:39px;width:41px;height:18px"><span class="s" style="left:5px;top:2px">About</span></div>
<div class="tab" style="left:49px;top:39px;width:52px;height:18px"><span class="s" style="left:5px;top:2px">Common</span></div>
<div class="tpanel"></div>
<div class="tab sel" style="left:101px;top:37px;width:46px;height:21px"><span class="s" style="left:7px;top:2px">Inputs</span></div>
<div class="list">
<div class="hdr"><span class="s" style="left:6px">Variable</span><span class="s" style="left:231px">Value</span><i style="left:225px"></i><i style="left:450px"></i></div>
<div class="row" style="top:25px"><svg class="ic" width="16" height="16"><use href="#i-ab"/></svg><span class="n s"> :</span><span class="v s">Expert General</span></div>
<div class="row g" style="top:45px"><svg class="ic" width="16" height="16"><use href="#i-bo"/></svg><span class="n s">Information Panel</span><span class="v s">true</span></div>
<div class="row" style="top:65px"><svg class="ic" width="16" height="16"><use href="#i-bo"/></svg><span class="n s">Increase Panel Size</span><span class="v s">false</span></div>
<div class="row g" style="top:85px"><svg class="ic" width="16" height="16"><use href="#i-in"/></svg><span class="n s">Information Panel Font size</span><span class="v s">10</span></div>
<div class="row" style="top:105px"><svg class="ic" width="16" height="16"><use href="#i-in"/></svg><span class="n s">Strategy Type</span><span class="v s">NN ADP 3</span></div>
<div class="row g" style="top:125px"><svg class="ic" width="16" height="16"><use href="#i-in"/></svg><span class="n s">Recovery Type</span><span class="v s">OFF</span></div>
<div class="row" style="top:145px"><svg class="ic" width="16" height="16"><use href="#i-in"/></svg><span class="n s">Recovery Trades</span><span class="v s">2</span></div>
<div class="row g" style="top:165px"><svg class="ic" width="16" height="16"><use href="#i-db"/></svg><span class="n s">Recovery Multiplier</span><span class="v s">2.0</span></div>
<div class="row" style="top:185px"><svg class="ic" width="16" height="16"><use href="#i-db"/></svg><span class="n s">Recovery During Loss GRID Step</span><span class="v s">20.0</span></div>
<div class="row g" style="top:205px"><svg class="ic" width="16" height="16"><use href="#i-db"/></svg><span class="n s">Recovery During Loss GRID Profit</span><span class="v s">15.0</span></div>
<div class="row" style="top:225px"><svg class="ic" width="16" height="16"><use href="#i-in"/></svg><span class="n s">Magic-Number</span><span class="v s">785163681</span></div>
<div class="row g" style="top:245px"><svg class="ic" width="16" height="16"><use href="#i-ab"/></svg><span class="n s">Comment</span><span class="v s">CoreX_G</span></div>
<div class="row" style="top:265px"><svg class="ic" width="16" height="16"><use href="#i-ab"/></svg><span class="n s"> :</span><span class="v s">Risk-Management</span></div>
<div class="row g" style="top:285px"><svg class="ic" width="16" height="16"><use href="#i-db"/></svg><span class="n s">Exchange Rate</span><span class="v s">1.0</span></div>
<div class="row" style="top:305px"><svg class="ic" width="16" height="16"><use href="#i-in"/></svg><span class="n s">Trading-Risk</span><span class="v s">high</span></div>
<div class="row g" style="top:325px"><svg class="ic" width="16" height="16"><use href="#i-in"/></svg><span class="n s">Manual Risk % (0 = off)</span><span class="v s">0</span></div>
<div class="row" style="top:345px"><svg class="ic" width="16" height="16"><use href="#i-bo"/></svg><span class="n s">Automatic Lotsize</span><span class="v s">true</span></div>
<div class="row g" style="top:365px"><svg class="ic" width="16" height="16"><use href="#i-db"/></svg><span class="n s">Lotsize</span><span class="v s">0.01</span></div>
<div class="row" style="top:385px"><svg class="ic" width="16" height="16"><use href="#i-ab"/></svg><span class="n s"> :</span><span class="v s">Trading-Management</span></div>
<div class="row g" style="top:405px"><svg class="ic" width="16" height="16"><use href="#i-bo"/></svg><span class="n s">Only one open Position</span><span class="v s">false</span></div>
<div class="row" style="top:425px"><svg class="ic" width="16" height="16"><use href="#i-bo"/></svg><span class="n s">Hide TP and SL</span><span class="v s">false</span></div>
<div class="row g" style="top:445px"><svg class="ic" width="16" height="16"><use href="#i-db"/></svg><span class="n s">Take Profit ADP1</span><span class="v s">150.0</span></div>
<div class="row" style="top:465px"><svg class="ic" width="16" height="16"><use href="#i-db"/></svg><span class="n s">Stop Loss ADP1</span><span class="v s">510.0</span></div>
<div class="row g" style="top:485px"><svg class="ic" width="16" height="16"><use href="#i-db"/></svg><span class="n s">Take Profit ADP2</span><span class="v s">30.0</span></div>
<div class="row" style="top:505px"><svg class="ic" width="16" height="16"><use href="#i-db"/></svg><span class="n s">Stop Loss ADP2</span><span class="v s">330.0</span></div>
<div class="row g" style="top:525px"><svg class="ic" width="16" height="16"><use href="#i-db"/></svg><span class="n s">Take Profit ADP3</span><span class="v s">90.0</span></div>
<div class="row" style="top:545px"><svg class="ic" width="16" height="16"><use href="#i-db"/></svg><span class="n s">Stop Loss ADP3</span><span class="v s">260.0</span></div>
<div class="row g" style="top:565px"><svg class="ic" width="16" height="16"><use href="#i-db"/></svg><span class="n s">Take Profit ADP4</span><span class="v s">50.0</span></div>
<div class="cdiv"></div>
<div class="sb"><svg width="17" height="17" style="position:absolute;left:0;top:0"><path d="M5 11.5 L8.5 8 L12 11.5" stroke="#606060" stroke-width="1.6" fill="none"/></svg><div class="thumb"></div><svg width="17" height="17" style="position:absolute;left:0;bottom:0"><path d="M5 6.5 L8.5 10 L12 6.5" stroke="#606060" stroke-width="1.6" fill="none"/></svg></div>
</div>
<div class="btn " style="left:497px;top:598px;width:103px;height:21px;line-height:19px"><span class="s">Load</span></div>
<div class="btn " style="left:497px;top:631px;width:103px;height:21px;line-height:19px"><span class="s">Save</span></div>
<div class="btn def" style="left:373px;top:669px;width:73px;height:21px;line-height:19px"><span class="s">OK</span></div>
<div class="btn " style="left:454px;top:669px;width:73px;height:21px;line-height:19px"><span class="s">Cancel</span></div>
<div class="btn " style="left:535px;top:669px;width:73px;height:21px;line-height:19px"><span class="s">Reset</span></div>
<svg class="grip" width="12" height="12" viewBox="0 0 12 12"><g fill="#bfbfbf" shape-rendering="crispEdges"><rect x="6" y="0" width="2" height="2"/><rect x="3" y="3" width="2" height="2"/><rect x="6" y="3" width="2" height="2"/><rect x="1" y="6" width="1" height="2"/><rect x="3" y="6" width="2" height="2"/><rect x="6" y="6" width="2" height="2"/></g></svg>
</div>
</body></html>
